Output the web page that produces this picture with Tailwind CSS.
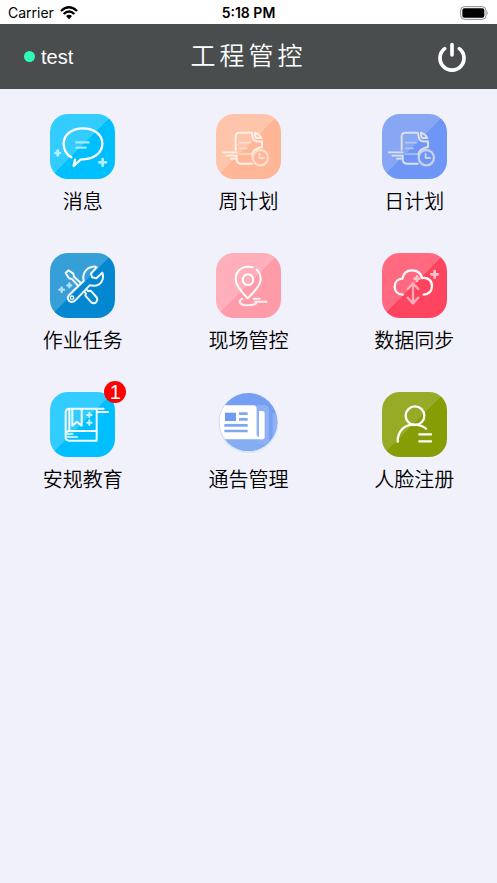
<!DOCTYPE html>
<html lang="zh-CN">
<head>
    <meta charset="UTF-8">
    <meta name="viewport" content="width=device-width, initial-scale=1.0">
    <title>工程管控</title>
    <script src="https://cdn.jsdelivr.net/npm/@tailwindcss/browser@4"></script>
</head>
<body class="min-h-screen bg-[#f1f1fb] text-black font-['Liberation_Sans','Noto_Sans_CJK_SC',sans-serif]">

    <!-- Status bar -->
    <div class="grid h-6 grid-cols-3 items-center bg-white px-2 pt-px text-sm font-['Inter',sans-serif]">
        <div class="flex items-center gap-1.5">
            <span>Carrier</span>
            <svg class="h-3.5 w-[18px]" viewBox="0 0 54 42" fill="none" stroke="#000" stroke-width="7">
                <path d="M3 15 Q27 -7 51 15"/>
                <path d="M11 24 Q27 9 43 24"/>
                <path d="M18 30 Q27 23 36 30 L27 40Z" fill="#000" stroke="none"/>
            </svg>
        </div>
        <div class="text-center font-semibold">5:18 PM</div>
        <svg class="h-3.5 w-[29px] justify-self-end" viewBox="0 0 87 42" fill="none">
            <rect x="2" y="2" width="76" height="38" rx="11" stroke="#8a8a8a" stroke-width="3"/>
            <rect x="7" y="7" width="66" height="28" rx="6" fill="#000"/>
            <path d="M82 15 Q87 21 82 27Z" fill="#8a8a8a"/>
        </svg>
    </div>

    <!-- Header -->
    <header class="grid h-[65px] grid-cols-3 items-center bg-[#4a4d4d] px-6 text-white">
        <div class="flex items-center gap-1.5 text-xl">
            <span class="size-[11px] rounded-full bg-[#2dfab5]"></span>
            <span>test</span>
        </div>
        <h1 class="text-center text-[25px] font-[350] tracking-[4px] whitespace-nowrap">工程管控</h1>
        <button class="mr-1.5 justify-self-end" aria-label="退出">
            <svg class="size-[30px]" viewBox="0 0 90 90" fill="none" stroke="#fff" stroke-width="11" stroke-linecap="round">
                <path d="M23 20 A36 36 0 1 0 67 20"/>
                <path d="M45 8 V39"/>
            </svg>
        </button>
    </header>

    <!-- Menu -->
    <main class="grid grid-cols-3 gap-y-[37px] pt-[25px] font-[350]">
        <a href="#" class="flex flex-col items-center gap-[9px]">
            <span class="size-[65px] rounded-[18px] bg-[linear-gradient(135deg,#33ccff_49%,#00bfff_49%)]">
                <svg class="size-full" viewBox="0 0 195 195" fill="none" stroke="#fff" stroke-width="7" stroke-linecap="round" stroke-linejoin="round">
                    <path d="M64 130 C49 121 41 106 41 89 C41 61 67 43 99 43 S157 61 157 89 S131 135 99 136 L92 137 L71 156 L75 137"/>
                    <path d="M79 85 H116 M79 101 H107" stroke="#a6e8ff"/>
                    <path d="M23 110 V124 M16 117 H30 M158 135 V155 M148 145 H168" stroke="#b8edff" stroke-width="8"/>
                </svg>
            </span>
            <span class="text-xl leading-7">消息</span>
        </a>
        <a href="#" class="flex flex-col items-center gap-[9px]">
            <span class="size-[65px] rounded-[18px] bg-[linear-gradient(135deg,#ffc5aa_49%,#ffb696_49%)]">
                <svg class="size-full" viewBox="0 0 195 195" fill="none" stroke="#fff0e8" stroke-width="6" stroke-linecap="round" stroke-linejoin="round">
                    <path d="M59 108 V67 Q59 56 70 56 H108 Q110 77 116 80 Q121 83 138 82 V99 Q112 104 108 122"/>
                    <path d="M62 125 V138 Q64 149 75 149 H107"/>
                    <path d="M117 56 Q117 71 122 72 H136 Q130 60 117 56Z"/>
                    <path d="M20 115 H62 M31 125 H62 M45 134 H62" stroke-width="5"/>
                    <path d="M71 86 H103 M71 103 H93 M71 120 H103" stroke="#ffddce" stroke-width="5"/>
                    <circle cx="133" cy="131" r="23" stroke="#ffdccb" stroke-width="7"/>
                    <path d="M131 119 V132 H144" stroke="#ffdccb"/>
                </svg>
            </span>
            <span class="text-xl leading-7">周计划</span>
        </a>
        <a href="#" class="flex flex-col items-center gap-[9px]">
            <span class="size-[65px] rounded-[18px] bg-[linear-gradient(135deg,#87a6f4_49%,#6e96f6_49%)]">
                <svg class="size-full" viewBox="0 0 195 195" fill="none" stroke="#dcdfe8" stroke-width="6" stroke-linecap="round" stroke-linejoin="round">
                    <path d="M59 108 V67 Q59 56 70 56 H108 Q110 77 116 80 Q121 83 138 82 V99 Q112 104 108 122"/>
                    <path d="M62 125 V138 Q64 149 75 149 H107"/>
                    <path d="M117 56 Q117 71 122 72 H136 Q130 60 117 56Z"/>
                    <path d="M20 115 H62 M31 125 H62 M45 134 H62" stroke-width="5"/>
                    <path d="M71 86 H103 M71 103 H93 M71 120 H103" stroke="#b5c5f0" stroke-width="5"/>
                    <circle cx="133" cy="131" r="23" stroke="#c8d1e8" stroke-width="7"/>
                    <path d="M131 119 V132 H144" stroke="#c8d1e8"/>
                </svg>
            </span>
            <span class="text-xl leading-7">日计划</span>
        </a>
        <a href="#" class="flex flex-col items-center gap-[9px]">
            <span class="size-[65px] rounded-[18px] bg-[linear-gradient(135deg,#369fd8_49%,#0387d0_49%)]">
                <svg class="size-full" viewBox="0 0 195 195" fill="none" stroke="#f2faff" stroke-width="6" stroke-linecap="round" stroke-linejoin="round">
                    <path d="M57 126 L101 84 C96 63 108 44 128 41 Q135 40 140 43 L123 61 L126 73 L139 76 L157 59 C162 72 158 87 147 94 C138 100 128 99 119 97 L76 142 Q66 151 57 143 Q50 135 57 126Z"/>
                    <circle cx="66" cy="134" r="5" stroke-width="4"/>
                    <path d="M84 98 L66 78 L57 76 L47 60 L55 52 L70 62 L72 71 L93 91"/>
                    <path d="M103 116 L108 122 L106 128 L124 148 Q132 154 139 147 Q145 139 139 132 L122 113 L114 114 L109 109"/>
                    <path d="M35 103 V117 M28 110 H42 M58 91 V103 M52 97 H64" stroke="#b5def5" stroke-width="7"/>
                </svg>
            </span>
            <span class="text-xl leading-7">作业任务</span>
        </a>
        <a href="#" class="flex flex-col items-center gap-[9px]">
            <span class="size-[65px] rounded-[18px] bg-[linear-gradient(135deg,#ffafba_49%,#ff9ba9_49%)]">
                <svg class="size-full" viewBox="0 0 195 195" fill="none" stroke="#fff" stroke-width="6" stroke-linecap="round" stroke-linejoin="round">
                    <path d="M110 43 Q103 41 96 41 C74 41 59 57 59 79 C59 98 77 118 95 136 C114 117 134 97 134 78 Q134 60 122 50"/>
                    <circle cx="96" cy="80" r="16"/>
                    <path d="M79 137 C64 144 71 157 95 157 C115 157 128 150 117 146 H151 M113 137 H131" stroke="#fff0f2"/>
                </svg>
            </span>
            <span class="text-xl leading-7">现场管控</span>
        </a>
        <a href="#" class="flex flex-col items-center gap-[9px]">
            <span class="size-[65px] rounded-[18px] bg-[linear-gradient(135deg,#ff6a81_49%,#ff4460_49%)]">
                <svg class="size-full" viewBox="0 0 195 195" fill="none" stroke="#fff" stroke-width="7" stroke-linecap="round" stroke-linejoin="round">
                    <path d="M62 125 C46 124 38 113 38 101 C38 87 48 78 61 77 C64 61 75 52 90 52 C106 52 117 61 120 75 C139 72 150 84 150 99 C150 114 140 124 125 125"/>
                    <path d="M93 93 V150 M77 108 L93 91 L109 108 M77 134 L93 151 L109 134" stroke="#ffabb7"/>
                    <path d="M105 70 V84 M98 77 H112 M158 54 V74 M148 64 H168" stroke="#ffc0c9" stroke-width="8"/>
                </svg>
            </span>
            <span class="text-xl leading-7">数据同步</span>
        </a>
        <a href="#" class="flex flex-col items-center gap-[9px]">
            <span class="relative size-[65px] rounded-[18px] bg-[linear-gradient(135deg,#33ccff_49%,#00bfff_49%)]">
                <svg class="size-full" viewBox="0 0 195 195" fill="none" stroke="#f2fcff" stroke-width="6" stroke-linecap="round" stroke-linejoin="round">
                    <path d="M161 50 H58 Q47 50 47 62 V135 Q47 146 58 146 H140 V117 H57 Q47 118 47 130"/>
                    <path d="M58 52 V116 M140 51 V116 M144 60 H174"/>
                    <path d="M67 51 V101 L81 89 L95 101 V51"/>
                    <path d="M53 126 H69 M53 135 H82" stroke-width="4"/>
                    <path d="M118 62 V76 M111 69 H125 M118 85 V99 M111 92 H125" stroke="#c4f0ff"/>
                </svg>
                <span class="absolute -top-[11px] -right-[11px] flex size-[22px] items-center justify-center rounded-full bg-[#ff0000] text-xl leading-none text-white">1</span>
            </span>
            <span class="text-xl leading-7">安规教育</span>
        </a>
        <a href="#" class="flex flex-col items-center gap-[9px]">
            <span class="size-[65px]">
                <svg class="size-full overflow-visible" viewBox="0 0 195 195">
                    <clipPath id="disc"><circle cx="97" cy="90" r="87"/></clipPath>
                    <circle cx="97" cy="93" r="90" fill="#dbe5fa"/>
                    <g clip-path="url(#disc)">
                        <rect width="195" height="195" fill="#759ff2"/>
                        <path d="M0 142 H122 V160 H195 V195 H0Z" fill="#86acf3"/>
                        <path d="M122 39 H147 Q159 41 159 52 V158 H122Z M170 64 H195 V158 H170Z" fill="#8fb0f5"/>
                        <path d="M0 40 H112 Q122 40 122 50 V129 Q122 135 129 135 V57 H138 Q146 57 146 65 V134 Q146 142 138 142 H0Z" fill="#fff"/>
                        <rect x="27" y="62" width="33" height="25" fill="#6f9bf0"/>
                        <path d="M69 65 H95 M69 82 H95 M25 100 H95 M25 117 H95" stroke="#7fa7f2" stroke-width="8"/>
                    </g>
                </svg>
            </span>
            <span class="text-xl leading-7">通告管理</span>
        </a>
        <a href="#" class="flex flex-col items-center gap-[9px]">
            <span class="size-[65px] rounded-[18px] bg-[linear-gradient(135deg,#98ab27_49%,#879d05_49%)]">
                <svg class="size-full" viewBox="0 0 195 195" fill="none" stroke="#fff" stroke-width="7" stroke-linecap="round">
                    <circle cx="99" cy="71" r="28"/>
                    <path d="M47 149 C47 116 68 98 95 98 Q118 98 132 110"/>
                    <path d="M112 127 H147 M112 148 H147"/>
                </svg>
            </span>
            <span class="text-xl leading-7">人脸注册</span>
        </a>
    </main>
</body>
</html>
